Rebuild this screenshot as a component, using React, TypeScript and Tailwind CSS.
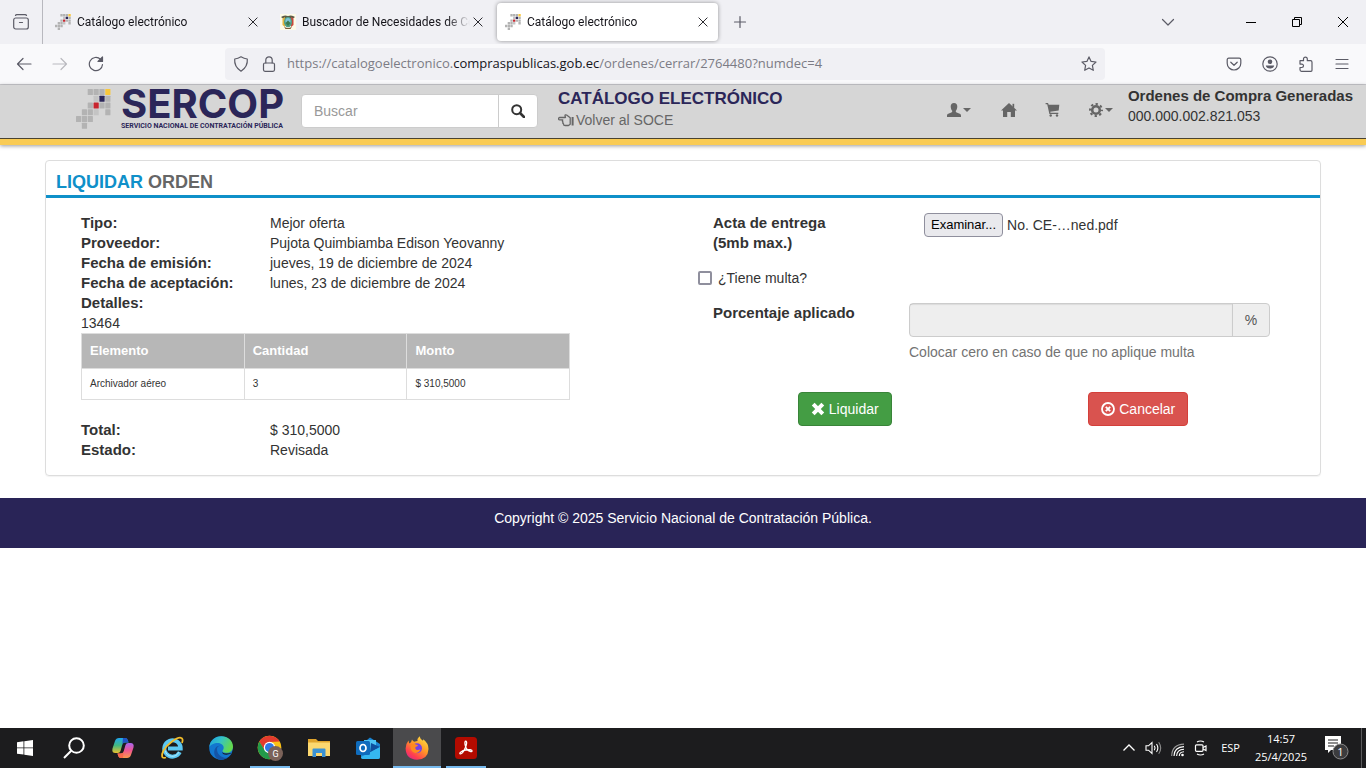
import type { ReactNode } from 'react'

interface TabInfo {
  title: string
  icon: 'sercop' | 'escudo'
  active?: boolean
}

interface OrderItem {
  name: string
  quantity: number
  amount: string
}

const tabs: TabInfo[] = [
  { title: 'Catálogo electrónico', icon: 'sercop' },
  { title: 'Buscador de Necesidades de Co', icon: 'escudo' },
  { title: 'Catálogo electrónico', icon: 'sercop', active: true },
]

const orderData = [
  ['Tipo:', 'Mejor oferta'],
  ['Proveedor:', 'Pujota Quimbiamba Edison Yeovanny'],
  ['Fecha de emisión:', 'jueves, 19 de diciembre de 2024'],
  ['Fecha de aceptación:', 'lunes, 23 de diciembre de 2024'],
  ['Detalles:', ''],
]

const totals = [
  ['Total:', '$ 310,5000'],
  ['Estado:', 'Revisada'],
]

const items: OrderItem[] = [{ name: 'Archivador aéreo', quantity: 3, amount: '$ 310,5000' }]

// Cuadros del logo: columna, fila, color
const logoCells: [number, number, string][] = [
  [2, 0, '#b3b3b3'], [3, 0, '#b3b3b3'], [4, 0, '#b3b3b3'], [5, 0, '#f9c73b'],
  [3, 1, '#c4c4c4'], [4, 1, '#2b2659'], [5, 1, '#b3b3b3'],
  [2, 2, '#b3b3b3'], [3, 2, '#c8252f'], [4, 2, '#b3b3b3'], [5, 2, '#b3b3b3'],
  [1, 3, '#b3b3b3'], [2, 3, '#b3b3b3'], [3, 3, '#c4c4c4'], [5, 3, '#b3b3b3'],
  [0, 4, '#b3b3b3'], [1, 4, '#b3b3b3'], [2, 4, '#b3b3b3'],
  [1, 5, '#b3b3b3'],
]

function LogoMark({ className }: { className: string }) {
  return (
    <svg viewBox="0 0 35 40" preserveAspectRatio="none" className={className} aria-hidden="true">
      {logoCells.map(([col, row, color]) => (
        <rect key={`${col}-${row}`} x={col * 5.85} y={row * 6.75} width="5.2" height="6" rx="0.6" fill={color} />
      ))}
    </svg>
  )
}

function Escudo() {
  return (
    <svg viewBox="0 0 16 16" className="size-4" aria-hidden="true">
      <rect width="16" height="16" fill="#fdfbe8" />
      <path d="M1 3q3-2.500 7-1 4-1.500 7 1l-2 1.500H3z" fill="#5d5a45" />
      <path d="M2.500 4.500 5 3v10l-2.500-2z" fill="#e3b53c" />
      <path d="M13.500 4.500 11 3v10l2.500-2z" fill="#c9483c" />
      <ellipse cx="8" cy="8" rx="4" ry="5.200" fill="#4f9e86" />
      <ellipse cx="8" cy="7" rx="2.600" ry="3" fill="#7cc4d8" />
      <path d="M5.500 9 8 6.500 10.500 9 8 12z" fill="#3c7a4d" />
      <path d="M4 12.500q4 3 8 0l-1.500 2.500h-5z" fill="#7a5a34" />
    </svg>
  )
}

function Line({ children, size = 'size-4' }: { children: ReactNode; size?: string }) {
  return (
    <svg
      viewBox="0 0 16 16"
      className={size}
      fill="none"
      stroke="currentColor"
      strokeWidth="1.2"
      strokeLinecap="round"
      strokeLinejoin="round"
      aria-hidden="true"
    >
      {children}
    </svg>
  )
}

interface IconButtonProps {
  label: string
  width?: string
  className?: string
  children: ReactNode
}

function IconButton({ label, width = 'w-9', className = '', children }: IconButtonProps) {
  return (
    <button type="button" aria-label={label} className={`flex h-8 items-center justify-center text-[#5b5b66] ${width} ${className}`}>
      {children}
    </button>
  )
}

function CloseMark() {
  return (
    <Line size="size-3">
      <path d="M2.500 2.500l11 11M13.500 2.500l-11 11" />
    </Line>
  )
}

function TabStrip() {
  return (
    <div className="flex h-11 items-center bg-[#f0f0f4]">
      <div className="mr-1 flex h-11 w-[43px] items-center justify-center border-r border-[#b8b8be]">
        <button type="button" aria-label="Ver pestañas recientes" className="text-[#5b5b66]">
          <Line>
            <path d="M2.500 1.500q.3-.900 1.300-.900h8.400q1 0 1.300.9" />
            <rect x="0.700" y="4" width="14.600" height="11" rx="2" />
            <path d="M6.500 8.500h3" />
          </Line>
        </button>
      </div>
      <div className="flex gap-1">
        {tabs.map((tab, index) => (
          <div
            key={index}
            className={`flex h-[38px] w-[221px] items-center rounded pr-2 pl-2 text-[#15141a] ${
              tab.active ? 'bg-white shadow-[0_0_4px_rgba(0,0,0,0.4)]' : ''
            }`}
          >
            {tab.icon === 'sercop' ? <LogoMark className="size-4" /> : <Escudo />}
            <span className="ml-1.5 w-[168px] font-[Roboto,sans-serif] text-[12px] whitespace-nowrap [mask-image:linear-gradient(to_right,black_145px,transparent)]">
              {tab.title}
            </span>
            <button type="button" aria-label="Cerrar pestaña" className="ml-0.5">
              <CloseMark />
            </button>
          </div>
        ))}
      </div>
      <IconButton label="Nueva pestaña" className="ml-1">
        <Line>
          <path d="M8 2.500v11M2.500 8h11" />
        </Line>
      </IconButton>
      <IconButton label="Listar pestañas" className="mr-[42px] ml-auto">
        <Line>
          <path d="M2.500 5.500 8 11l5.500-5.500" />
        </Line>
      </IconButton>
      <div className="flex text-black">
        <button type="button" aria-label="Minimizar" className="flex h-8 w-[46px] items-center justify-center">
          <span className="h-px w-2.5 bg-black" />
        </button>
        <button type="button" aria-label="Restaurar" className="flex h-8 w-[46px] items-center justify-center">
          <svg viewBox="0 0 10 10" className="size-2.5" fill="none" stroke="currentColor" aria-hidden="true">
            <path d="M.5 2.500h7v7h-7zM2.500 2.500v-2h7v7h-2" />
          </svg>
        </button>
        <button type="button" aria-label="Cerrar" className="flex h-8 w-[46px] items-center justify-center">
          <svg viewBox="0 0 10 10" className="size-2.5" fill="none" stroke="currentColor" aria-hidden="true">
            <path d="M0 0l10 10M10 0 0 10" />
          </svg>
        </button>
      </div>
    </div>
  )
}

function AddressBar() {
  return (
    <div className="flex h-[41px] items-center border-b border-[#ccccd0] bg-[#f9f9fb] px-1.5">
      <IconButton label="Atrás">
        <Line>
          <path d="M15 8H1.500M7 2.500 1.500 8 7 13.500" />
        </Line>
      </IconButton>
      <IconButton label="Adelante" className="opacity-40">
        <Line>
          <path d="M1 8h13.500M9 2.500 14.500 8 9 13.500" />
        </Line>
      </IconButton>
      <IconButton label="Recargar">
        <Line>
          <path d="M14.500 8.500A6.600 6.600 0 1 1 12.500 3.300l1.300 1.400" />
          <path d="M14.500 1v4.500H10z" fill="currentColor" />
        </Line>
      </IconButton>
      <div className="ml-[111px] flex h-8 flex-1 items-center rounded bg-[#f0f0f4] pl-2 text-[#5b5b66]">
        <Line>
          <path d="M8 .8q3 1.900 6.300 2.200.7 7.700-6.300 12.200Q1 10.700 1.700 3 5 2.700 8 .8z" />
        </Line>
        <span className="ml-3">
          <Line>
            <rect x="2.500" y="7" width="11" height="8.300" rx="1.500" />
            <path d="M4.800 7V4a3.200 3.200 0 0 1 6.400 0v3" />
          </Line>
        </span>
        <p className="ml-2.5 flex-1 text-[13px] whitespace-nowrap text-[#7c7c85]">
          https://catalogoelectronico.<span className="text-[#15141a]">compraspublicas.gob.ec</span>
          /ordenes/cerrar/2764480?numdec=4
        </p>
        <IconButton label="Añadir a marcadores" width="w-8">
          <Line>
            <path d="M8 .9l2.100 4.500 4.900.6-3.600 3.400.9 4.900L8 11.900l-4.300 2.400.9-4.900L1 6l4.900-.6z" />
          </Line>
        </IconButton>
      </div>
      <div className="ml-[111px] flex">
        <IconButton label="Guardar en Pocket">
          <Line>
            <path d="M2.800 2.200h10.400q1.600 0 1.600 1.600v3.400a6.800 6.800 0 0 1-13.600 0V3.800q0-1.600 1.600-1.600z" />
            <path d="M4.800 6.200 8 9.300l3.200-3.100" />
          </Line>
        </IconButton>
        <IconButton label="Cuenta">
          <Line>
            <circle cx="8" cy="8" r="7.200" />
            <circle cx="8" cy="5.800" r="2.300" fill="currentColor" stroke="none" />
            <path d="M3.800 9.500h8.400q-.5 3-4.200 3t-4.200-3z" fill="currentColor" stroke="none" />
          </Line>
        </IconButton>
        <IconButton label="Extensiones">
          <Line>
            <path d="M5.500 4.700V3a1.900 1.900 0 0 1 3.800 0v1.700h3.200q1.500 0 1.500 1.500v8.100q0 1-1 1H3.500q-1.500 0-1.500-1.500v-2.300h1.800a1.700 1.700 0 0 0 0-3.400H2V4.700z" />
          </Line>
        </IconButton>
        <IconButton label="Menú">
          <Line>
            <path d="M2 3.500h12M2 8h12M2 12.500h12" />
          </Line>
        </IconButton>
      </div>
    </div>
  )
}

function Caret() {
  return (
    <svg viewBox="0 0 8 4" className="h-1 w-2" fill="currentColor" aria-hidden="true">
      <path d="M0 0h8L4 4z" />
    </svg>
  )
}

function SiteHeader() {
  return (
    <header className="flex h-[60px] border-b-[6px] border-[#f9cb54] bg-[#d6d6d6] shadow-[0_1px_4px_rgba(0,0,0,0.4)]">
      <div className="flex flex-1 items-start border-b border-[#4a4330] pr-[13px] pl-[76px]">
        <a href="#inicio" className="mt-1 flex w-[208px] gap-2.5 text-[#2b2659]">
          <LogoMark className="h-10 w-[35px] shrink-0" />
          <span className="block font-[Inter,sans-serif]">
            <span className="block h-[33px] text-[40px] leading-[30px] font-bold">SERCOP</span>
            <span className="block font-[Roboto,sans-serif] text-[7px] leading-[8px] font-bold whitespace-nowrap">
              SERVICIO NACIONAL DE CONTRATACIÓN PÚBLICA
            </span>
          </span>
        </a>
        <form className="mt-[9px] ml-[17px] flex h-[34px] w-[237px] rounded border border-[#ccc] bg-white">
          <input
            type="text"
            aria-label="Buscar"
            placeholder="Buscar"
            className="min-w-0 flex-1 px-3 text-[14px] outline-none placeholder:text-[#999]"
          />
          <button type="button" aria-label="Buscar" className="flex w-[39px] items-center justify-center border-l border-[#ccc] text-[#333]">
            <svg viewBox="0 0 14 14" className="size-3.5" fill="none" stroke="currentColor" aria-hidden="true">
              <circle cx="5.700" cy="5.700" r="4.500" strokeWidth="2" />
              <path d="M9 9l4 4" strokeWidth="2.600" strokeLinecap="round" />
            </svg>
          </button>
        </form>
        <div className="mt-[3px] ml-5">
          <h1 className="text-[17px] leading-[22px] font-bold whitespace-nowrap text-[#2b2659]">CATÁLOGO ELECTRÓNICO</h1>
          <a href="#soce" className="flex items-center text-[14px] leading-5 text-[#666]">
            <svg viewBox="0 0 16 14" className="mr-0.5 h-3.5 w-4" fill="none" stroke="currentColor" aria-hidden="true">
              <path
                d="M7.500 4.500H1.700a1.200 1.200 0 0 0 0 2.400h3.100q-.9 1.300.2 2.100-.6 1.200.5 1.900 0 1.600 1.700 1.600h3.300l1.700-1.200V4.800L8.600 2q-1.700-.6-1.600.8z"
                strokeWidth="1.300"
                strokeLinejoin="round"
              />
              <path d="M14.600 4v8.500" strokeWidth="2" />
            </svg>
            Volver al SOCE
          </a>
        </div>
        <nav className="mt-[17px] ml-auto flex h-4 items-center text-[#666]">
          <button type="button" aria-label="Usuario" className="flex items-center gap-0.5">
            <svg viewBox="0 0 14 14" className="size-3.5" fill="currentColor" aria-hidden="true">
              <path d="M7 0c2.200 0 3.400 1.500 3.300 3.700C10.200 5.700 9.500 7 8.800 7.800c-.2.900.1 1.400.9 1.700l3 1.300c.9.400 1.300 1 1.300 2V14H0v-1.200c0-1 .4-1.600 1.300-2l3-1.300c.8-.300 1.100-.8.9-1.700C4.500 7 3.800 5.700 3.700 3.700 3.600 1.500 4.800 0 7 0z" />
            </svg>
            <Caret />
          </button>
          <a href="#home" aria-label="Inicio" className="ml-[30px]">
            <svg viewBox="0 0 16 14" className="h-3.5 w-4" fill="currentColor" aria-hidden="true">
              <path d="M8 0 16 7.500h-2V14H9.800V9H6.200v5H2V7.500H0z" />
              <path d="M11.500.8h1.700v4h-1.700z" />
            </svg>
          </a>
          <a href="#carrito" aria-label="Carrito" className="ml-7">
            <svg viewBox="0 0 15 14" className="h-3.5 w-[15px]" fill="currentColor" aria-hidden="true">
              <path d="M.6 0H3l.7 1.800H14.300l-.6 5.600-8.500 1.300.3 1.100h7.800V11H4.400L2.200 1.200H.6z" />
              <circle cx="5.700" cy="12.500" r="1.200" />
              <circle cx="12" cy="12.500" r="1.200" />
            </svg>
          </a>
          <button type="button" aria-label="Configuración" className="ml-[29px] flex items-center gap-0.5">
            <svg viewBox="0 0 14 14" className="size-3.5" fill="none" stroke="currentColor" aria-hidden="true">
              <circle cx="7" cy="7" r="3.800" strokeWidth="2.600" />
              <circle cx="7" cy="7" r="6" strokeWidth="2" strokeDasharray="2.350 2.362" strokeDashoffset="1.170" />
            </svg>
            <Caret />
          </button>
        </nav>
        <div className="mt-px ml-[15px] leading-5 whitespace-nowrap text-[#333]">
          <p className="text-[15px] font-bold">Ordenes de Compra Generadas</p>
          <p className="text-[14px]">000.000.002.821.053</p>
        </div>
      </div>
    </header>
  )
}

function DataList({ rows }: { rows: string[][] }) {
  return (
    <dl>
      {rows.map(([label, value]) => (
        <div key={label} className="flex">
          <dt className="w-[189px] text-[15px] font-bold">{label}</dt>
          <dd>{value}</dd>
        </div>
      ))}
    </dl>
  )
}

function OrderSummary() {
  return (
    <div>
      <DataList rows={orderData} />
      <p>13464</p>
      <table className="mb-5 w-5/6 table-fixed border-collapse text-left">
        <thead>
          <tr className="h-[35px] bg-[#b7b7b7] text-[13px] text-white">
            {['Elemento', 'Cantidad', 'Monto'].map((title) => (
              <th key={title} className="border border-[#ddd] px-2 font-bold">
                {title}
              </th>
            ))}
          </tr>
        </thead>
        <tbody>
          {items.map((item) => (
            <tr key={item.name} className="h-[31px] text-[10px]">
              <td className="border border-[#ddd] px-2">{item.name}</td>
              <td className="border border-[#ddd] px-2">{item.quantity}</td>
              <td className="border border-[#ddd] px-2">{item.amount}</td>
            </tr>
          ))}
        </tbody>
      </table>
      <DataList rows={totals} />
    </div>
  )
}

function CloseOrderForm() {
  return (
    <form>
      <div className="flex px-[15px]">
        <label htmlFor="acta" className="w-[211px] text-[15px] leading-5 font-bold">
          Acta de entrega
          <br />
          (5mb max.)
        </label>
        <div className="flex h-6 items-center">
          <input id="acta" type="file" className="sr-only" />
          <label htmlFor="acta" className="mr-1 rounded border border-[#8f8f9d] bg-[#e9e9ed] px-1.5 text-[13px] leading-[22px] text-black">
            Examinar...
          </label>
          <span>No. CE-…ned.pdf</span>
        </div>
      </div>
      <div className="mt-[15px] flex items-center">
        <input
          id="multa"
          type="checkbox"
          className="mr-1.5 size-3.5 appearance-none rounded-xs border-2 border-[#8f8f9d] bg-white"
        />
        <label htmlFor="multa">¿Tiene multa?</label>
      </div>
      <div className="mt-[15px] flex px-[15px]">
        <label htmlFor="porcentaje" className="w-[196px] shrink-0 text-[15px] leading-5 font-bold">
          Porcentaje aplicado
        </label>
        <div className="flex-1">
          <div className="flex h-[34px] rounded border border-[#ccc] bg-[#eee]">
            <input id="porcentaje" type="text" disabled className="min-w-0 flex-1 px-3 shadow-[inset_0_1px_1px_rgba(0,0,0,0.08)]" />
            <span className="flex w-[37px] items-center justify-center border-l border-[#ccc] text-[#555]">%</span>
          </div>
          <p className="mt-[5px] text-[#737373]">Colocar cero en caso de que no aplique multa</p>
        </div>
      </div>
      <div className="mt-[30px] grid grid-cols-2 justify-items-center">
        <button type="button" className="flex h-[34px] items-center gap-1 rounded border border-[#398439] bg-[#449d44] px-3 text-white">
          <svg viewBox="0 0 14 14" className="size-3.5" fill="none" stroke="currentColor" strokeWidth="4" aria-hidden="true">
            <path d="M2.200 2.200l9.600 9.600M11.800 2.200l-9.600 9.600" />
          </svg>
          Liquidar
        </button>
        <button type="button" className="flex h-[34px] items-center gap-1 rounded border border-[#d43f3a] bg-[#d9534f] px-3 text-white">
          <svg viewBox="0 0 14 14" className="size-3.5" fill="none" stroke="currentColor" aria-hidden="true">
            <circle cx="7" cy="7" r="6" strokeWidth="1.800" />
            <path d="M4.800 4.800l4.400 4.400M9.200 4.800 4.800 9.200" strokeWidth="1.900" />
          </svg>
          Cancelar
        </button>
      </div>
    </form>
  )
}

function CopilotIcon() {
  return (
    <svg viewBox="0 0 24 24" className="size-6" aria-hidden="true">
      <defs>
        <linearGradient id="cop-a" x1="0" y1="0" x2="0" y2="1">
          <stop offset="0" stopColor="#1fa7f0" />
          <stop offset="0.5" stopColor="#43b981" />
          <stop offset="1" stopColor="#e9c22e" />
        </linearGradient>
        <linearGradient id="cop-b" x1="0" y1="0" x2="0" y2="1">
          <stop offset="0" stopColor="#a765f0" />
          <stop offset="0.5" stopColor="#f0568f" />
          <stop offset="1" stopColor="#fb9a4b" />
        </linearGradient>
      </defs>
      <path d="M8 2h6q2 0 2.700 2l.8 2.500H14q-2 0-2.700 2.300L9.500 15q-.6 2-2.700 2H4.500Q.5 17 1.500 12.500L4 5q1-3 4-3z" fill="url(#cop-a)" />
      <path d="M12 2h2.500q1.700 0 2.300 2l.8 2.500H14q-2 0-2.700 2.300z" fill="#2152c4" />
      <path d="M16 22h-6q-2 0-2.700-2l-.8-2.500H10q2 0 2.700-2.300L14.500 9q.6-2 2.700-2h2.300q4 0 3 4.500L20 19q-1 3-4 3z" fill="url(#cop-b)" />
      <path d="M12 22H9.500q-1.700 0-2.300-2l-.7-2.500H10q2 0 2.700-2.300z" fill="#f8694d" />
    </svg>
  )
}

function ExplorerIcon() {
  return (
    <svg viewBox="0 0 24 24" className="size-6" fill="none" aria-hidden="true">
      <path d="M19.800 16.200a8.200 8.200 0 1 1 .9-3.700H8" stroke="#5cc8f2" strokeWidth="4" />
      <path d="M18.800 16.200a7.200 7.200 0 0 1-13.500-1.500" stroke="#b6ebfb" strokeWidth="1" />
      <path d="M22 7q1.700-4.500-1.200-5.200C17 1 7 8 3.500 14.500 1 19.500 1.500 23 6 21.500" stroke="#f3bd2a" strokeWidth="1.800" />
    </svg>
  )
}

function EdgeIcon() {
  return (
    <svg viewBox="0 0 24 24" className="size-6" aria-hidden="true">
      <defs>
        <linearGradient id="edge-a" x1="0" y1="0" x2="1" y2="0.400">
          <stop offset="0" stopColor="#1b9de2" />
          <stop offset="0.5" stopColor="#35c3c5" />
          <stop offset="1" stopColor="#63d84f" />
        </linearGradient>
      </defs>
      <circle cx="12" cy="12" r="11.800" fill="#1377cf" />
      <path d="M.3 11C1 4.500 6 .2 12.300.2 19 .2 24 5 24 10.500c0 4-2.800 6.300-6.200 6.300-2.600 0-4.300-1-4.300-1.900 0-.700 1.200-1.200 1.200-3.200 0-2.300-2.300-4.700-6-4.700C5 7 1.500 8.700.3 11z" fill="url(#edge-a)" />
      <path d="M8 12.500C7.700 18 12 22.300 18.500 21.800 16 23.600 13.500 24 11 23.800 6 22.500 4.500 18 5.500 14c.8-3.200 3.500-4.700 6-4.300-1.900.2-3.300 1-3.500 2.800z" fill="#1554a6" />
      <path d="M22.700 16.800c-5 3.500-9.500 1.700-9.700-.8 1.500 1.800 6 2 9.700.8z" fill="#1c1c1e" />
    </svg>
  )
}

function ChromeIcon() {
  return (
    <svg viewBox="0 0 26 26" className="size-[26px]" aria-hidden="true">
      <circle cx="12.500" cy="12.500" r="11.800" fill="#fbc116" />
      <path d="M2.300 6.600A11.800 11.800 0 0 1 22.700 6.600L12.500 7 7.400 15.500z" fill="#e33b2e" />
      <path d="M2.300 6.600a11.800 11.800 0 0 0 10.200 17.700l5-8.800-10-.5z" fill="#229a4a" />
      <circle cx="12.500" cy="12.500" r="5.700" fill="#fff" />
      <circle cx="12.500" cy="12.500" r="4.500" fill="#3078e8" />
      <circle cx="18.500" cy="18.500" r="7.500" fill="#7b6259" />
      <text x="18.500" y="21.700" textAnchor="middle" fontSize="9" fontFamily="Roboto, sans-serif" fill="#fff">
        G
      </text>
    </svg>
  )
}

function FolderIcon() {
  return (
    <svg viewBox="0 0 22 20" className="h-5 w-[22px]" aria-hidden="true">
      <path d="M0 1h8l2 2h12v15H0z" fill="#e0a42c" />
      <path d="M0 4.500h22V18H0z" fill="#fcd870" />
      <path d="M4.500 19v-7.500q0-1 1-1h11q1 0 1 1V19H14v-4H8v4z" fill="#3b92d4" />
    </svg>
  )
}

function OutlookIcon() {
  return (
    <svg viewBox="0 0 24 22" className="h-[22px] w-6" aria-hidden="true">
      <path d="M5 8 14 .5 24 7v13q0 2-2 2H7q-2 0-2-2z" fill="#1a86d4" />
      <path d="M8 3h12v11H8z" fill="#4cc4f5" />
      <path d="M15 6l9 4-10 6z" fill="#0f4f9e" />
      <path d="M5 20 24 10v10q0 2-2 2H7q-2 0-2-2z" fill="#35b8f1" />
      <rect y="4" width="14" height="14" rx="1.500" fill="#0f6cbd" />
      <ellipse cx="7" cy="11" rx="3" ry="3.500" fill="none" stroke="#fff" strokeWidth="1.700" />
    </svg>
  )
}

function FirefoxIcon() {
  return (
    <svg viewBox="0 0 24 24" className="size-6" aria-hidden="true">
      <defs>
        <linearGradient id="ff-a" x1="0.900" y1="0" x2="0.200" y2="1">
          <stop offset="0" stopColor="#ffe74a" />
          <stop offset="0.450" stopColor="#ff9a26" />
          <stop offset="0.800" stopColor="#ff3f4e" />
          <stop offset="1" stopColor="#e1258a" />
        </linearGradient>
      </defs>
      <path d="M3.500 4.500 4.200 7.500 6 6.200 7 3.500q.8 1.700 2.500 2.300Q11 5 12.500 5 12 2.500 14.500.2q.5 2.500 3.500 4.600.3-.7.200-1.600Q23.500 7 23.500 13 23 23.500 12 23.700 1 23.300.6 12.500.5 8 3.500 4.500z" fill="url(#ff-a)" />
      <circle cx="12" cy="12.300" r="5" fill="#7542e5" />
      <path d="M5.500 8.500q3-1.500 5.500 0l2 .8q0 1.200-2.500 1.700-.6 1.500.5 2.500 2 1.300 4.500-.2-1.500 4-5.500 3.700Q5 16 5.500 8.500z" fill="#ff8a1f" />
    </svg>
  )
}

function AcrobatIcon() {
  return (
    <svg viewBox="0 0 22 22" className="size-[22px]" aria-hidden="true">
      <rect width="22" height="22" rx="3.500" fill="#b30b00" />
      <path
        d="M10.700 4.200c1.600 0 .9 3.800-.5 6.800-1.500 3.300-3.700 6.300-5 5.800-1.500-.7 1.500-3 5.500-3.800 3.500-.7 6.500-.3 6.400 1-.1 1.500-3.300.3-5.200-1.800-1.900-2.100-2.700-8-1.200-8z"
        fill="none"
        stroke="#fff"
        strokeWidth="1.300"
      />
    </svg>
  )
}

function WindowsIcon() {
  return (
    <svg viewBox="0 0 16 16" className="size-4" fill="#fff" aria-hidden="true">
      <path d="M0 2.200 6.500 1.300v6.200H0zM7.300 1.200 16 0v7.500H7.300zM0 8.300h6.500v6.300L0 13.700zM7.300 8.300H16V16l-8.700-1.200z" />
    </svg>
  )
}

function SearchIcon() {
  return (
    <svg viewBox="0 0 22 22" className="size-[22px]" fill="none" stroke="#fff" strokeWidth="2" aria-hidden="true">
      <circle cx="13.500" cy="8.500" r="7.300" />
      <path d="M8.200 13.800 1 21" />
    </svg>
  )
}

const taskbarApps = [
  { label: 'Inicio', icon: <WindowsIcon />, state: 'idle' },
  { label: 'Buscar', icon: <SearchIcon />, state: 'idle' },
  { label: 'Copilot', icon: <CopilotIcon />, state: 'idle' },
  { label: 'Internet Explorer', icon: <ExplorerIcon />, state: 'idle' },
  { label: 'Microsoft Edge', icon: <EdgeIcon />, state: 'idle' },
  { label: 'Google Chrome', icon: <ChromeIcon />, state: 'open' },
  { label: 'Explorador de archivos', icon: <FolderIcon />, state: 'idle' },
  { label: 'Outlook', icon: <OutlookIcon />, state: 'idle' },
  { label: 'Firefox', icon: <FirefoxIcon />, state: 'active' },
  { label: 'Adobe Acrobat', icon: <AcrobatIcon />, state: 'open' },
]

function Taskbar() {
  return (
    <div className="flex h-10 items-center bg-[#1c1c1e] pl-px text-[11px] text-white">
      <div className="flex gap-px">
        {taskbarApps.map((app) => (
          <button
            key={app.label}
            type="button"
            aria-label={app.label}
            className={`relative flex h-10 w-12 items-center justify-center ${app.state === 'active' ? 'bg-[#4a4a4c]' : ''}`}
          >
            {app.icon}
            {app.state === 'open' && <span className="absolute inset-x-1 bottom-0 h-0.5 bg-[#76b9ed]" />}
            {app.state === 'active' && <span className="absolute inset-x-0 bottom-0 h-0.5 bg-[#76b9ed]" />}
          </button>
        ))}
      </div>
      <div className="ml-auto flex items-center">
        <button type="button" aria-label="Mostrar iconos ocultos" className="mr-2">
          <svg viewBox="0 0 16 16" className="size-4" fill="none" stroke="#fff" strokeWidth="1.300" aria-hidden="true">
            <path d="M2.500 10.500 8 5l5.500 5.500" />
          </svg>
        </button>
        <svg viewBox="0 0 17 16" className="mr-[9px] h-4 w-[17px]" fill="none" stroke="#fff" strokeWidth="1.100" aria-hidden="true">
          <path d="M1 5.800h2.500L7 2.500v11l-3.500-3.300H1z" />
          <path d="M9.300 5.800q1.500 2.200 0 4.400M11.500 4q2.700 4 0 8" />
          <path d="M13.700 2.300q4 5.700 0 11.400" stroke="#8b8b8b" />
        </svg>
        <svg viewBox="0 0 14 14" className="mt-1 mr-[9px] size-3.5" fill="none" stroke="#fff" strokeWidth="1.100" aria-hidden="true">
          <circle cx="11.500" cy="12" r="1.300" fill="#fff" stroke="none" />
          <path d="M8.300 13q0-4 4.700-4.200M5.600 13Q5.800 6.500 13 6.200M3 13Q3.200 4 13 3.600" />
          <path d="M.7 13Q1 1.500 13 1.100" stroke="#9a9a9a" />
        </svg>
        <svg viewBox="0 0 14 16" className="mr-[13px] h-4 w-3.5" fill="none" stroke="#fff" strokeWidth="1.200" aria-hidden="true">
          <rect x="1.500" y="4.800" width="7.500" height="6.500" rx="1" />
          <path d="M9 7.500 12 6v4.500L9 9M3 2q3.500-2 7 0M3 14q3.500 2 7 0" />
        </svg>
        <span className="mr-[15px]">ESP</span>
        <p className="mr-[18px] text-center leading-[18px]">
          14:57
          <br />
          25/4/2025
        </p>
        <button type="button" aria-label="Notificaciones" className="mr-3">
          <svg viewBox="0 0 24 24" className="size-6" aria-hidden="true">
            <path d="M0 0h16v14H6l-3 3v-3H0z" fill="#fff" />
            <path d="M3 4h10M3 7h10M3 10h6" stroke="#1c1c1e" strokeWidth="1.100" />
            <circle cx="15.500" cy="15.500" r="7.500" fill="#3c3c3e" stroke="#8b8b8b" />
            <text x="15.500" y="19.500" textAnchor="middle" fontSize="11" fontFamily="Open Sans, sans-serif" fill="#fff">
              1
            </text>
          </svg>
        </button>
        <span className="mr-1 h-10 w-px bg-[#5a5a5c]" />
      </div>
    </div>
  )
}

export default function App() {
  return (
    <div className="flex min-h-screen flex-col bg-white font-['Open_Sans',sans-serif]">
      <TabStrip />
      <AddressBar />
      <div className="flex-1 font-['Liberation_Sans',Arial,sans-serif] text-[14px] leading-5 text-[#333]">
        <SiteHeader />
        <main className="mx-[45px] mt-[15px] mb-[22px] rounded border border-[#ddd] shadow-[0_1px_1px_rgba(0,0,0,0.05)]">
          <h2 className="border-b-[3px] border-[#0f90c9] px-2.5 pt-[11px] pb-[3px] text-[18px] font-bold text-[#666]">
            <span className="text-[#0f90c9]">LIQUIDAR</span> ORDEN
          </h2>
          <section className="grid grid-cols-2 gap-[30px] px-[35px] py-[15px]">
            <OrderSummary />
            <CloseOrderForm />
          </section>
        </main>
        <footer className="h-[50px] bg-[#292457] pt-2.5 text-center text-white">
          Copyright © 2025 Servicio Nacional de Contratación Pública.
        </footer>
      </div>
      <Taskbar />
    </div>
  )
}
